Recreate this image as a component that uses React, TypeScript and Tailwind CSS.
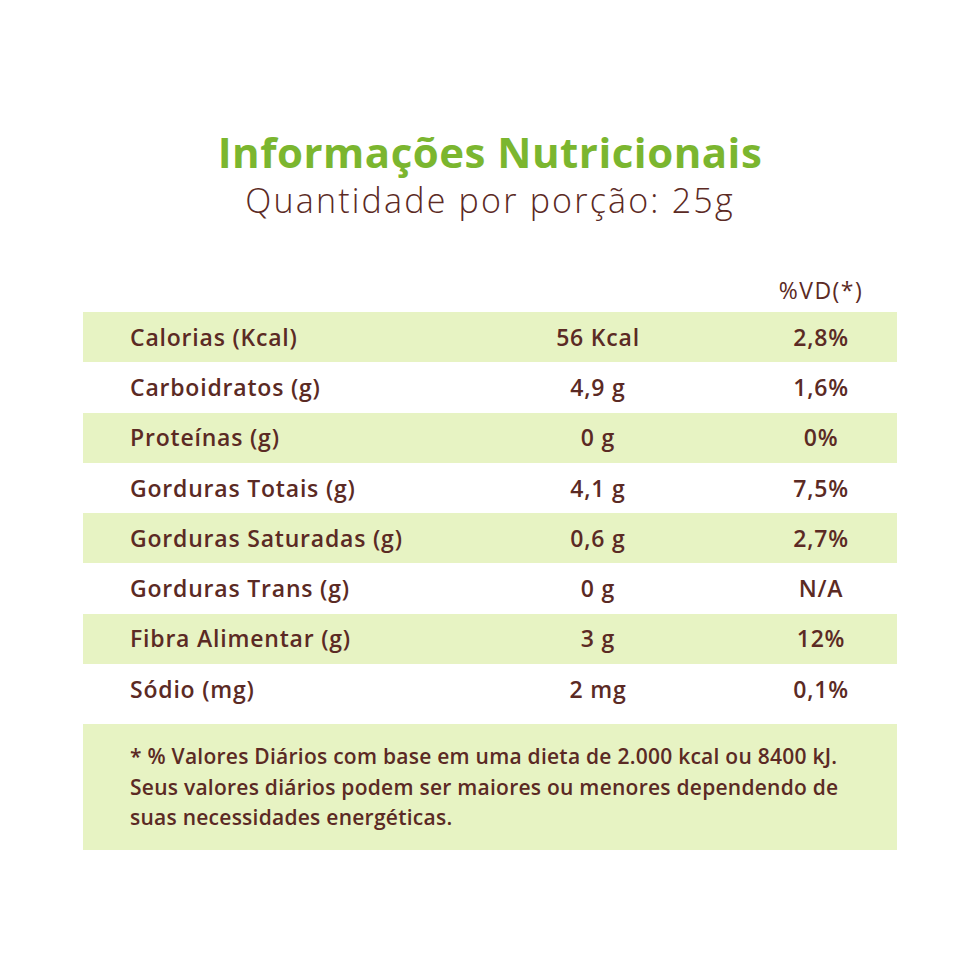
const rows: [string, string, string][] = [
  ["Calorias (Kcal)", "56 Kcal", "2,8%"],
  ["Carboidratos (g)", "4,9 g", "1,6%"],
  ["Proteínas (g)", "0 g", "0%"],
  ["Gorduras Totais (g)", "4,1 g", "7,5%"],
  ["Gorduras Saturadas (g)", "0,6 g", "2,7%"],
  ["Gorduras Trans (g)", "0 g", "N/A"],
  ["Fibra Alimentar (g)", "3 g", "12%"],
  ["Sódio (mg)", "2 mg", "0,1%"],
];

export default function App() {
  return (
    <div
      className="w-[980px] h-[980px] bg-white text-[#5b2a24] pt-[126px]"
      style={{ fontFamily: "'Open Sans', Lato, sans-serif" }}
    >
      {/* Header */}
      <div className="flex flex-col items-center">
        <h1 className="text-[42px] leading-[52px] font-bold text-[#7bb62f] tracking-[0.5px]">
          Informações Nutricionais
        </h1>
        <p className="text-[34px] leading-[44px] font-light tracking-[2.2px]">
          Quantidade por porção: 25g
        </p>
      </div>

      {/* Table */}
      <div className="mx-[83px] mt-[46px]">
        <div className="grid grid-cols-[430px_170px_1fr] h-[44px] items-center">
          <div />
          <div />
          <div className="text-center text-[23px] tracking-[1.5px] pl-[62px]">%VD(*)</div>
        </div>
        {rows.map(([name, qty, vd], i) => (
          <div
            key={name}
            className={`grid grid-cols-[430px_170px_1fr] h-[50.25px] items-center text-[23px] font-semibold tracking-[0.8px] ${
              i % 2 === 0 ? "bg-[#e7f3c3]" : "bg-white"
            }`}
          >
            <div className="pl-[47px] whitespace-nowrap">{name}</div>
            <div className="text-center">{qty}</div>
            <div className="text-center pl-[62px]">{vd}</div>
          </div>
        ))}

        {/* Footnote */}
        <div className="mt-[10px] bg-[#e7f3c3] h-[126px] px-[47px] pt-[17px] text-[21px] leading-[30.5px] font-semibold tracking-[0.25px] whitespace-nowrap">
          <p>* % Valores Diários com base em uma dieta de 2.000 kcal ou 8400 kJ.</p>
          <p>Seus valores diários podem ser maiores ou menores dependendo de</p>
          <p>suas necessidades energéticas.</p>
        </div>
      </div>
    </div>
  );
}
